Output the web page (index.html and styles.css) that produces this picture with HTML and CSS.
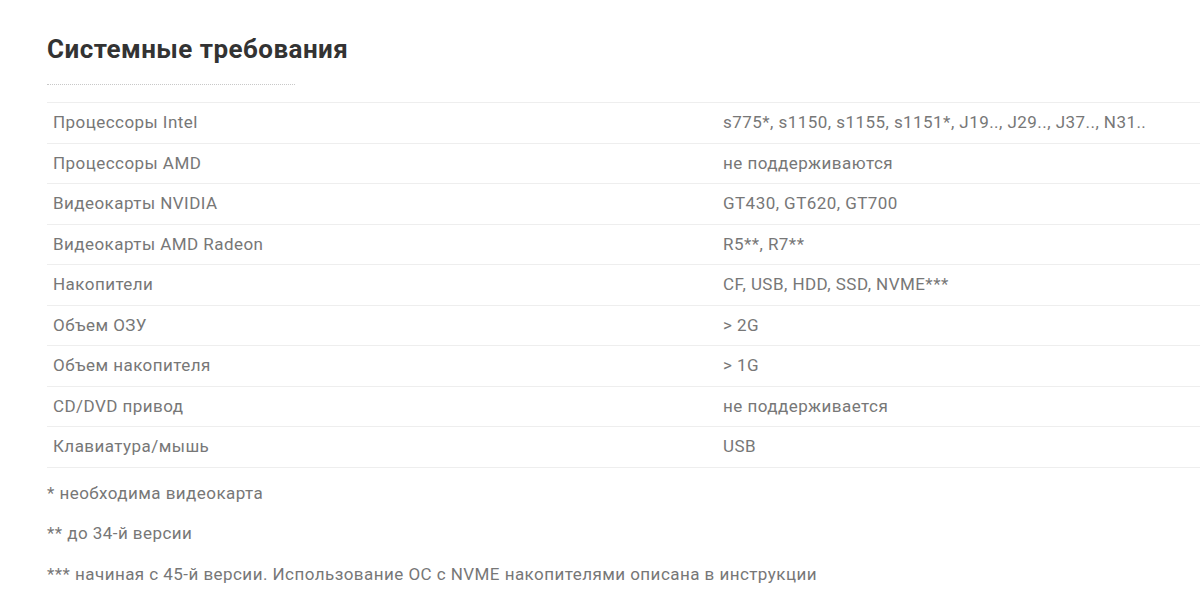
FILE: index.html
```html
<!DOCTYPE html>
<html lang="ru">
<head>
<meta charset="utf-8">
<link rel="stylesheet" href="styles.css">
</head>
<body>
<section class="reqs">
  <h2 class="reqs-title">Системные требования</h2>
  <div class="reqs-divider"></div>
  <table class="reqs-table">
    <tbody>
      <tr><td class="col-name">Процессоры Intel</td><td>s775*, s1150, s1155, s1151*, J19.., J29.., J37.., N31..</td></tr>
      <tr><td class="col-name">Процессоры AMD</td><td>не поддерживаются</td></tr>
      <tr><td class="col-name">Видеокарты NVIDIA</td><td>GT430, GT620, GT700</td></tr>
      <tr><td class="col-name">Видеокарты AMD Radeon</td><td>R5**, R7**</td></tr>
      <tr><td class="col-name">Накопители</td><td>CF, USB, HDD, SSD, NVME***</td></tr>
      <tr><td class="col-name">Объем ОЗУ</td><td>&gt; 2G</td></tr>
      <tr><td class="col-name">Объем накопителя</td><td>&gt; 1G</td></tr>
      <tr><td class="col-name">CD/DVD привод</td><td>не поддерживается</td></tr>
      <tr><td class="col-name">Клавиатура/мышь</td><td>USB</td></tr>
    </tbody>
  </table>
  <div class="reqs-notes">
    <p>* необходима видеокарта</p>
    <p>** до 34-й версии</p>
    <p>*** начиная с 45-й версии. Использование ОС с NVME накопителями описана в инструкции</p>
  </div>
</section>
</body>
</html>
```
FILE: styles.css
```css
html, body {
  margin: 0;
  padding: 0;
  background: #fff;
}
body {
  font-family: Roboto, "Liberation Sans", sans-serif;
  color: #777;
  overflow: hidden;
}
.reqs {
  padding: 34px 0 0 47px;
}
.reqs-title {
  margin: 0;
  font-size: 26px;
  line-height: 30px;
  font-weight: 700;
  letter-spacing: 0.45px;
  color: #333;
}
.reqs-divider {
  width: 248px;
  margin-top: 20px;
  border-bottom: 1px dotted #c8c8c8;
}
.reqs-table {
  margin-top: 17px;
  width: 100%;
  border-collapse: collapse;
  font-size: 17px;
  letter-spacing: 0.45px;
}
.reqs-table td {
  padding: 8px 6px;
  line-height: 23.5px;
  border-top: 1px solid #eee;
  border-bottom: 1px solid #eee;
  text-align: left;
  vertical-align: middle;
}
.reqs-table .col-name {
  width: 658px;
}
.reqs-notes {
  padding-top: 5px;
  font-size: 17px;
  letter-spacing: 0.45px;
}
.reqs-notes p {
  margin: 0;
  line-height: 40.5px;
}
```
